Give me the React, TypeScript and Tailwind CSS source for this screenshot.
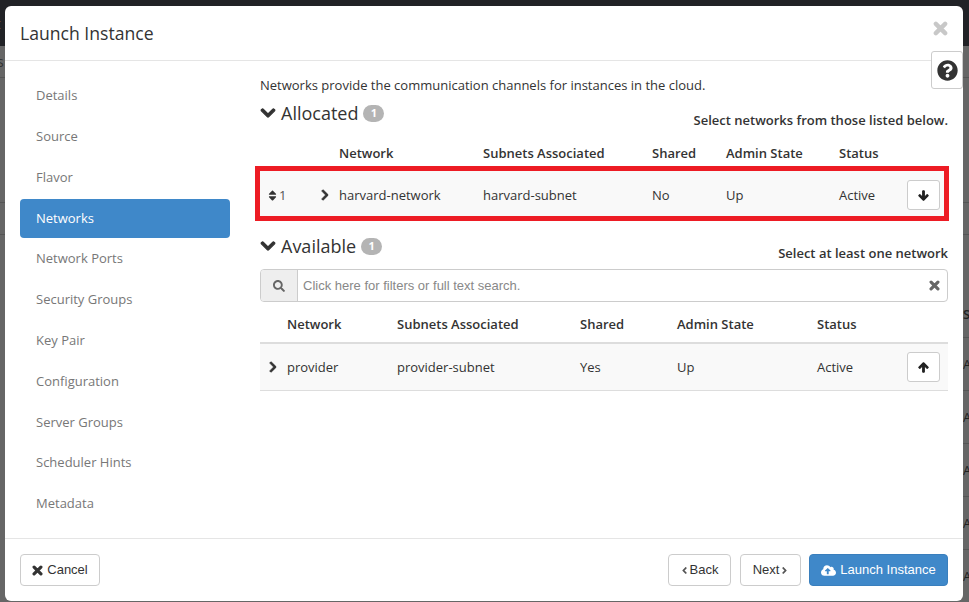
import React from "react";
import { FaQuestionCircle, FaChevronDown, FaChevronRight, FaSort, FaSearch, FaArrowDown, FaArrowUp, FaCloudUploadAlt, FaAngleLeft, FaAngleRight } from "react-icons/fa";

const nav = ["Details", "Source", "Flavor", "Networks", "Network Ports", "Security Groups", "Key Pair", "Configuration", "Server Groups", "Scheduler Hints", "Metadata"];

function XIcon({ size, className }: { size: number; className: string }) {
  return (
    <svg width={size} height={size} viewBox="0 0 10 10" className={className}>
      <path d="M1.9 1.9L8.1 8.1M8.1 1.9L1.9 8.1" stroke="currentColor" strokeWidth="2.9" strokeLinecap="round" fill="none" />
    </svg>
  );
}

function Cell({ children }: { children: React.ReactNode }) {
  return <div className="pt-[2px]">{children}</div>;
}

function Heading({ title, hint, className }: { title: string; hint: string; className: string }) {
  return (
    <div className={`flex justify-between ${className}`}>
      <div className="flex items-center h-[26px]">
        <FaChevronDown stroke="currentColor" strokeWidth={40} className="text-[16px] text-[#333] mr-[5px]" />
        <span className="text-[18px] font-medium text-[#333] leading-[26px]">{title}</span>
        <span className="ml-[5px] w-[21px] h-[17px] rounded-[9px] bg-[#b4b4b4] text-white text-[11px] font-bold flex items-center justify-center">1</span>
      </div>
      <div className="text-[13px] font-semibold text-[#333] self-end leading-[18px]">{hint}</div>
    </div>
  );
}

function IconBtn({ children }: { children: React.ReactNode }) {
  return (
    <div className="w-[33px] h-[30px] bg-white border border-[#ccc] rounded-[3px] flex items-center justify-center text-[#222] text-[11px]">
      {children}
    </div>
  );
}

function FootBtn({ children, className }: { children: React.ReactNode; className: string }) {
  return (
    <div className={`h-[32px] rounded-[4px] border flex items-center justify-center text-[13px] font-['Liberation_Sans',sans-serif] ${className}`}>
      {children}
    </div>
  );
}

export default function App() {
  return (
    <div className="relative h-[602px] w-[969px] overflow-hidden bg-[#666] font-['Open_Sans',sans-serif] text-[13px] text-[#333]">
      <div className="h-[46px] bg-[#212226] text-[#6b5a4a] text-[14px] leading-[48px] -ml-[11px]">st</div>
      <div className="h-[32px] border-b border-[#555] text-[#333] text-[14px] leading-[32px]">
        <span className="-ml-[3px]">s</span>
      </div>
      <div className="h-[125px] border-b border-[#555]" />
      <div className="h-[32px] border-b border-[#555]" />
      <div className="flex justify-end text-[#222]">
        <div className="w-[6px] overflow-hidden -mt-[235px]">
          <div className="mt-[290px] w-[16px]">
            <div className="h-[48px] leading-[48px] text-[13px] font-semibold border-b border-[#555]">S</div>
            {[0, 1, 2, 3, 4].map((i) => (
              <div key={i} className="h-[53px] leading-[53px] text-[13px] border-b border-[#555]">A</div>
            ))}
          </div>
        </div>
      </div>

      <div className="absolute left-[5px] top-[6px] w-[958px] h-[595px] bg-white rounded-[6px] flex flex-col">
        <div className="h-[55px] shrink-0 border-b border-[#e5e5e5] pl-[15px] flex items-center justify-between">
          <div className="text-[17.6px] font-medium leading-[25px] text-[#333]">Launch Instance</div>
          <XIcon size={15} className="text-[#c8c8c8] mr-[15px] -mt-[9px]" />
        </div>

        <div className="flex-1 flex min-h-0">
          <div className="w-[240px] shrink-0 pl-[15px] pt-[13.6px]">
            {nav.map((n) => (
              <div
                key={n}
                className={`w-[210px] h-[38.8px] mt-[2px] rounded-[4px] pl-[16px] flex items-center ${n === "Networks" ? "bg-[#3f88c9] text-white" : "text-[#777]"}`}
              >
                {n}
              </div>
            ))}
          </div>

          <div className="relative w-[708px] pl-[15px] pt-[15px]">
            <div className="leading-[18px]">Networks provide the communication channels for instances in the cloud.</div>
            <Heading title="Allocated" hint="Select networks from those listed below." className="mt-[1px] w-[688px] h-[34px] pt-[5px]" />

            <div className="-ml-[5px] w-[694px]">
              <div className="grid grid-cols-[79px_144px_169px_74px_113px_68px_33px] pl-[5px] h-[24px] items-center font-semibold mt-[13px]">
                <div /><div>Network</div><div>Subnets Associated</div><div>Shared</div><div>Admin State</div><div>Status</div><div />
              </div>
              <div className="border-[5px] border-[#ed1c24] h-[55px] pt-[3px] bg-[#f9f9f9] grid grid-cols-[79px_144px_169px_74px_113px_68px_33px] items-center">
                <div className="flex items-center pl-[6px]">
                  <FaSort className="text-[13px] text-[#333]" />
                  <span className="w-[39px] text-[#555] pt-[2px]">1</span>
                  <FaChevronRight stroke="currentColor" strokeWidth={40} className="text-[12px] text-[#333] ml-[0.5px]" />
                </div>
                <Cell>harvard-network</Cell><Cell>harvard-subnet</Cell><Cell>No</Cell><Cell>Up</Cell><Cell>Active</Cell>
                <IconBtn><FaArrowDown stroke="currentColor" strokeWidth={50} /></IconBtn>
              </div>
            </div>

            <Heading title="Available" hint="Select at least one network" className="mt-[12px] w-[688px] h-[29px]" />

            <div className="mt-[7px] w-[688px] h-[33px] flex border border-[#ccc] rounded-[4px] overflow-hidden">
              <div className="w-[37px] bg-[#eee] border-r border-[#ccc] flex items-center justify-center text-[#666] text-[12px]"><FaSearch /></div>
              <div className="flex-1 pl-[5px] font-['Liberation_Sans',sans-serif] text-[#888] flex items-center justify-between pr-[7px] text-[13px]">
                <span className="pt-[1px]">Click here for filters or full text search.</span>
                <XIcon size={11} className="text-[#666]" />
              </div>
            </div>

            <div className="w-[688px]">
              <div className="grid grid-cols-[27px_110px_183px_97px_140px_90px_33px] h-[42px] pt-[6px] items-center font-semibold border-b-2 border-[#ddd]">
                <div /><div>Network</div><div>Subnets Associated</div><div>Shared</div><div>Admin State</div><div>Status</div><div />
              </div>
              <div className="grid grid-cols-[27px_110px_183px_97px_140px_90px_33px] h-[47px] items-center bg-[#f9f9f9] border-b border-[#ddd]">
                <div className="pl-[7px]"><FaChevronRight stroke="currentColor" strokeWidth={40} className="text-[12px] text-[#333]" /></div>
                <Cell>provider</Cell><Cell>provider-subnet</Cell><Cell>Yes</Cell><Cell>Up</Cell><Cell>Active</Cell>
                <IconBtn><FaArrowUp stroke="currentColor" strokeWidth={50} /></IconBtn>
              </div>
            </div>
          </div>
        </div>

        <div className="h-[63px] shrink-0 border-t border-[#e5e5e5] px-[15px] pt-[15px] flex justify-between">
          <FootBtn className="w-[80px] bg-white border-[#ccc] text-[#333] gap-[4px]"><XIcon size={11} className="text-[#333]" />Cancel</FootBtn>
          <div className="flex gap-[9px]">
            <FootBtn className="w-[63px] bg-white border-[#ccc] text-[#333] pr-[2px]"><FaAngleLeft className="text-[11px] text-[#555]" />Back</FootBtn>
            <FootBtn className="w-[61px] bg-white border-[#ccc] text-[#333] pl-[2px]">Next<FaAngleRight className="text-[11px] text-[#555]" /></FootBtn>
            <div className="-ml-[1px]"><FootBtn className="w-[139px] bg-[#3f88c9] border-[#3a7fbd] text-white gap-[4px]"><FaCloudUploadAlt className="text-[15px]" />Launch Instance</FootBtn></div>
          </div>
        </div>

        <div className="absolute right-0 top-[45px] w-[32px] h-[38px] bg-white border border-[#ccc] rounded-[3px] flex items-center justify-center">
          <FaQuestionCircle className="text-[21px] text-[#333]" />
        </div>
      </div>
    </div>
  );
}
